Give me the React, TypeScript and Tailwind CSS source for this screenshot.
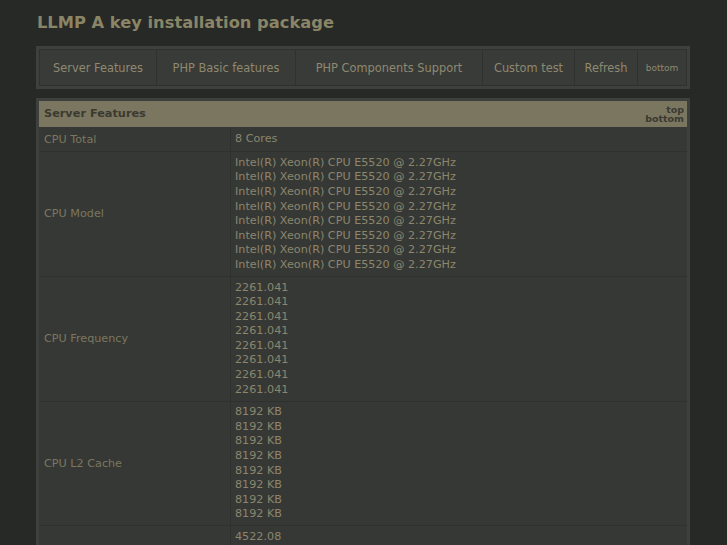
const NAV = [
  { label: 'Server Features', w: 'w-[117px]' },
  { label: 'PHP Basic features', w: 'w-[139px]' },
  { label: 'PHP Components Support', w: 'w-[187px]' },
  { label: 'Custom test', w: 'w-[92px]' },
  { label: 'Refresh', w: 'w-[63px]' },
  { label: 'bottom', w: 'w-[50px]', small: true },
];

const rep = (v: string) => Array.from({ length: 8 }, () => v);

const ROWS: { label: string; values: string[] }[] = [
  { label: 'CPU Total', values: ['8 Cores'] },
  { label: 'CPU Model', values: rep('Intel(R) Xeon(R) CPU E5520 @ 2.27GHz') },
  { label: 'CPU Frequency', values: rep('2261.041') },
  { label: 'CPU L2 Cache', values: rep('8192 KB') },
  { label: 'CPU Bogomips', values: rep('4522.08') },
];

export default function App() {
  return (
    <div className="min-h-screen bg-[#272926] font-['DejaVu_Sans',sans-serif] pl-[36px] pt-[13px] pb-8">
      <div className="w-[654px]">
        <h1 className="pl-px text-[16.3px] leading-[20px] font-bold text-[#8a8566]">
          LLMP A key installation package
        </h1>

        {/* top nav */}
        <div className="mt-[13px] bg-[#3e403d] p-[3px]">
          <div className="flex">
            {NAV.map((n) => (
              <div
                key={n.label}
                className={`${n.w} h-[37px] pt-[2px] flex items-center justify-center border-y border-l last:border-r border-[#2f312e] bg-[#393b38] text-[#8e8970] ${
                  n.small ? 'text-[9px]' : 'text-[11.4px]'
                }`}
              >
                {n.label}
              </div>
            ))}
          </div>
        </div>

        {/* features table */}
        <div className="mt-[9px] bg-[#3e403d] p-[3px]">
          <div className="flex items-center justify-between h-[26px] bg-[#7a7660] pl-[5px] pr-[3px]">
            <span className="text-[11.3px] font-bold text-[#3a3a31]">Server Features</span>
            <div className="flex flex-col items-end text-[9.5px] leading-[9.5px] font-bold text-[#3a3a31]">
              <span>top</span>
              <span>bottom</span>
            </div>
          </div>
          {ROWS.map((r) => (
            <div key={r.label} className="flex border-b border-[#2f312e] bg-[#363835] text-[11.2px]">
              <div className="w-[192px] shrink-0 flex items-center py-[4.5px] pl-[5px] leading-[15.3px] text-[#7b775f] border-r border-[#2f312e]">
                {r.label}
              </div>
              <div className="flex-1 flex flex-col justify-center py-[3.6px] pl-[4px] leading-[14.57px] text-[#8b866d]">
                {r.values.map((v, i) => (
                  <span key={i}>{v}</span>
                ))}
              </div>
            </div>
          ))}
        </div>
      </div>
    </div>
  );
}
